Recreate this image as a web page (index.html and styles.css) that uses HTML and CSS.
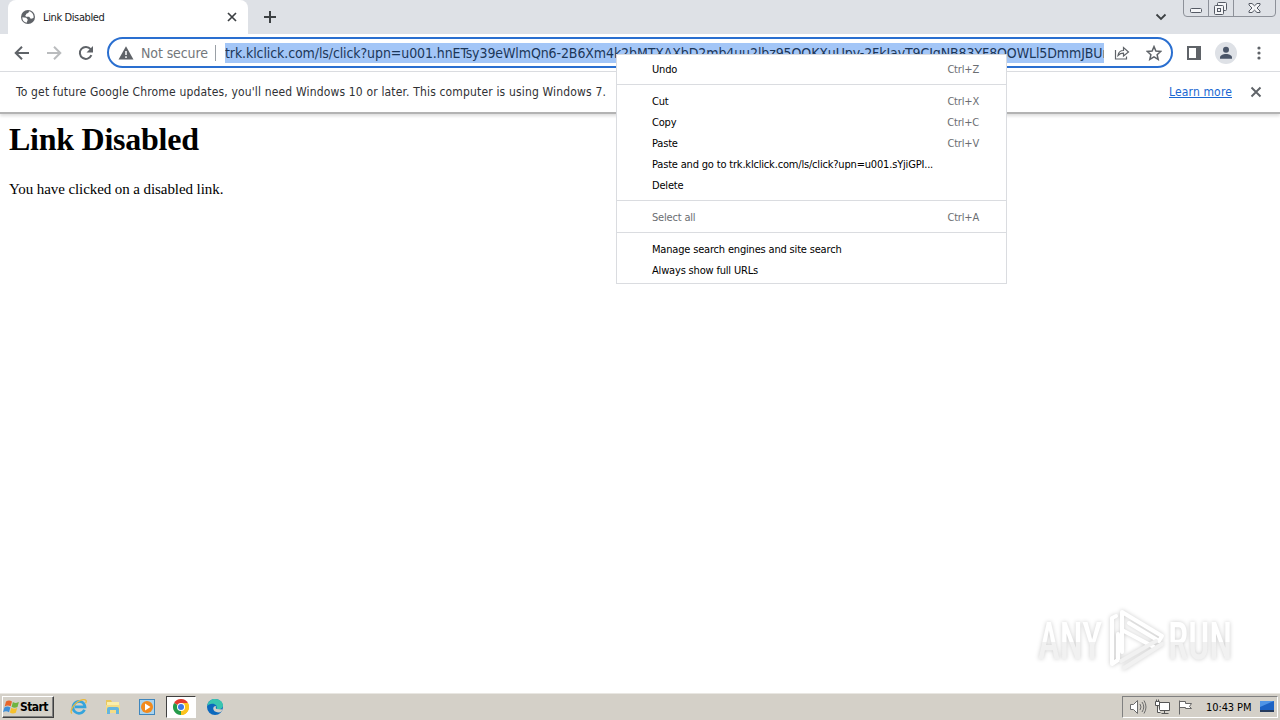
FILE: index.html
```html
<!DOCTYPE html>
<html lang="en">
<head>
  <meta charset="UTF-8">
  <meta name="viewport" content="width=device-width, initial-scale=1.0">
  <title>Link Disabled</title>
  <link rel="stylesheet" href="styles.css">
</head>
<body>
  <header class="tab-strip">
    <div class="tab">
      <svg class="favicon" width="16" height="16" viewBox="0 0 16 16">
        <circle cx="8" cy="8" r="7" fill="#5f6368"/>
        <path d="M2.3 8.2l4 .6 1.5 2-1.2 2.9C3.900 13.300 2.200 11 2.300 8.200zM9 2.300c-.2 1.400-1 2-2.200 2.300-.8.200-.4 1.500-1.600 1.800L6 7.700h3.200l1.500 2.100 1.500-.2 1.400-.9C14 5.500 12 2.900 9 2.300z" fill="#fff"/>
      </svg>
      <span class="tab-title">Link Disabled</span>
      <svg class="tab-close" width="10" height="10" viewBox="0 0 10 10"><path d="M1 1l8 8M9 1l-8 8" stroke="#3c4043" stroke-width="1.700"/></svg>
    </div>
    <svg class="new-tab" width="14" height="14" viewBox="0 0 14 14"><path d="M7 1v12M1 7h12" stroke="#3c4043" stroke-width="2"/></svg>
    <svg class="tab-search" width="12" height="8" viewBox="0 0 12 8"><path d="M1.500 1.500L6 6l4.500-4.500" fill="none" stroke="#3c4043" stroke-width="1.800"/></svg>
    <svg class="window-controls" width="94" height="18" viewBox="0 0 94 18" fill="none">
      <path d="M.5 0v13q0 3.500 3.500 3.500h85q3.500 0 3.500-3.500V0M25.500 0v16M50.500 0v16" stroke="#8d9199"/>
      <g stroke="#555a64" fill="#f4f5f7">
        <rect x="7.500" y="8.500" width="11" height="4" rx="1"/>
        <rect x="34.500" y="2.500" width="9" height="8" rx="1"/>
        <rect x="31.500" y="5.500" width="9" height="9" rx="1"/>
        <rect x="34.500" y="8.500" width="3" height="3"/>
        <path d="M66 3.500h3l2.500 2.300L74 3.500h3v1.500L74 8l3 3v1.500h-3l-2.500-2.300-2.500 2.300h-3V11l3-3-3-3z"/>
      </g>
    </svg>
  </header>

  <nav class="toolbar">
    <svg class="nav-icon" width="16" height="16" viewBox="0 0 16 16"><path d="M15 8H2M8 1.700L1.700 8 8 14.300" fill="none" stroke="#5f6368" stroke-width="2"/></svg>
    <svg class="nav-icon" width="16" height="16" viewBox="0 0 16 16"><path d="M1 8h13M8 1.700L14.300 8 8 14.300" fill="none" stroke="#babcbe" stroke-width="2"/></svg>
    <svg class="nav-icon" width="16" height="16" viewBox="0 0 16 16"><path d="M13.400 10.200A6 6 0 1 1 12.600 4.200" fill="none" stroke="#5f6368" stroke-width="2"/><path d="M15 1v6.500H8.500z" fill="#5f6368"/></svg>
    <div class="omnibox">
      <svg class="warning" width="16" height="14" viewBox="0 0 16 14"><path d="M8 .3L15.500 13.500H.5z" fill="#5f6368"/><path d="M8 5v4M8 10.300v1.700" stroke="#fff" stroke-width="1.500"/></svg>
      <span class="security">Not secure</span>
      <span class="divider"></span>
      <span class="url">trk.klclick.com/ls/click?upn=u001.hnETsy39eWlmQn6-2B6Xm4k2bMTXAXbD2mb4uu2lbz95OOKXuUpv-2FkIavT9CJqNB83YF8OOWLl5DmmJBUr</span>
      <svg class="share" width="16" height="14" viewBox="0 0 16 14" fill="none" stroke="#5f6368" stroke-width="1.200"><path d="M1.500 4v9h11v-2.500M4 9.500c.5-3.500 2.500-5 5.500-5V1.500L14.500 6l-5 4V7.200C7 7.200 5.400 8 4 9.500z"/></svg>
      <svg class="star" width="16" height="16" viewBox="0 0 16 16"><path d="M8 1.600l1.900 4.500 4.800.4-3.600 3.200 1.100 4.700L8 11.900l-4.200 2.500 1.100-4.700L1.300 6.500l4.800-.4z" fill="none" stroke="#5f6368" stroke-width="1.500"/></svg>
    </div>
    <svg class="side-panel" width="14" height="14" viewBox="0 0 14 14"><path d="M0 0h14v14H0zM2 2v10h7V2z" fill="#5f6368" fill-rule="evenodd"/></svg>
    <svg class="avatar" width="22" height="22" viewBox="0 0 22 22"><circle cx="11" cy="11" r="11" fill="#dee1e6"/><circle cx="11" cy="7.800" r="3" fill="#4a5568"/><path d="M5 16.800v-1.300c0-2.200 3-3.500 6-3.500s6 1.300 6 3.500v1.300z" fill="#4a5568"/></svg>
    <svg class="more" width="4" height="14" viewBox="0 0 4 14" fill="#5f6368"><circle cx="2" cy="2" r="1.600"/><circle cx="2" cy="7" r="1.600"/><circle cx="2" cy="12" r="1.600"/></svg>
  </nav>

  <div class="infobar">
    <span class="infobar-text">To get future Google Chrome updates, you'll need Windows 10 or later. This computer is using Windows 7.</span>
    <a class="learn-more">Learn more</a>
    <svg class="infobar-close" width="12" height="12" viewBox="0 0 12 12"><path d="M1.500 1.500l9 9M10.500 1.500l-9 9" stroke="#5f6368" stroke-width="1.900"/></svg>
  </div>

  <main class="page">
    <h1>Link Disabled</h1>
    <p>You have clicked on a disabled link.</p>
  </main>

  <div class="context-menu">
    <div class="menu-group">
      <div class="menu-item"><span>Undo</span><span class="shortcut">Ctrl+Z</span></div>
    </div>
    <div class="menu-group">
      <div class="menu-item"><span>Cut</span><span class="shortcut">Ctrl+X</span></div>
      <div class="menu-item"><span>Copy</span><span class="shortcut">Ctrl+C</span></div>
      <div class="menu-item"><span>Paste</span><span class="shortcut">Ctrl+V</span></div>
      <div class="menu-item"><span>Paste and go to trk.klclick.com/ls/click?upn=u001.sYjiGPI...</span></div>
      <div class="menu-item"><span>Delete</span></div>
    </div>
    <div class="menu-group">
      <div class="menu-item disabled"><span>Select all</span><span class="shortcut">Ctrl+A</span></div>
    </div>
    <div class="menu-group">
      <div class="menu-item"><span>Manage search engines and site search</span></div>
      <div class="menu-item"><span>Always show full URLs</span></div>
    </div>
  </div>

  <svg class="watermark" width="220" height="76" viewBox="0 0 220 76">
    <defs>
      <linearGradient id="fade" gradientUnits="userSpaceOnUse" x1="0" y1="0" x2="0" y2="76">
        <stop offset="0.500" stop-color="#fff"/>
        <stop offset="0.500" stop-color="#f1f1f1"/>
      </linearGradient>
    </defs>
    <g class="watermark-text" fill="url(#fade)">
      <text x="8" y="55" textLength="64" lengthAdjust="spacingAndGlyphs">ANY</text>
      <text x="138" y="55" textLength="64" lengthAdjust="spacingAndGlyphs">RUN</text>
    </g>
    <g fill="none" stroke="#fff" stroke-width="4" stroke-linejoin="round" stroke-linecap="round">
      <path d="M86 12l-4 2v46l6-4V30"/>
      <path d="M92 48V8l40 24-3 5-30-18"/>
      <path d="M92 26l32 17"/>
      <path d="M132 40L94 64M126 37L91 57" stroke="#f1f1f1"/>
    </g>
  </svg>

  <footer class="taskbar">
    <div class="start">
      <svg width="17" height="16" viewBox="0 0 17 16">
        <path d="M3 2.500q3-1.800 6 0L7.700 7.300q-3-1.600-6 .1z" fill="#e8662a"/>
        <path d="M9.900 3q3 1.700 6 .1l-1.400 4.800q-3 1.600-5.900-.1z" fill="#6fb43f"/>
        <path d="M1.400 8.400q3-1.600 6 0L6 13.200q-3-1.700-6 0z" fill="#3f8fd8"/>
        <path d="M8.300 8.800q3 1.700 5.900.1l-1.400 4.800q-3 1.600-5.900-.1z" fill="#f6c02c"/>
      </svg>
      <span>Start</span>
    </div>
    <div class="launcher">
      <svg width="18" height="18" viewBox="0 0 18 18" fill="none"><path d="M14.500 11.800a6 6 0 1 1 .5-3H5" stroke="#35a4dc" stroke-width="2.700"/><path d="M2 15.500C-1 13 5 3 13 1.700c3-.5 4 1 2.600 3.500" stroke="#e9b93c" stroke-width="1.300"/></svg>
    </div>
    <div class="launcher">
      <svg width="18" height="18" viewBox="0 0 18 18"><path d="M2 2h5l1 2h7v11H2z" fill="#e9c75c"/><path d="M3 4h12v5H3z" fill="#fbeeaa"/><path d="M2 7h14v8H2z" fill="#f4dc86"/><path d="M3 16v-5q0-2 2-2h8q2 0 2 2v5h-3v-4H6v4z" fill="#64b5df"/></svg>
    </div>
    <div class="launcher">
      <svg width="18" height="18" viewBox="0 0 18 18"><rect x="1.500" y="1.500" width="15" height="15" fill="#a9d3ee" stroke="#3f86bd"/><circle cx="9" cy="9" r="6" fill="#f28a1c"/><path d="M7 5.500L12.500 9 7 12.500z" fill="#fff"/></svg>
    </div>
    <div class="launcher active">
      <svg width="16" height="16" viewBox="0 0 16 16"><path d="M8 8L1.070 4A8 8 0 0 1 14.930 4z" fill="#e33b2e"/><path d="M8 8l6.930-4A8 8 0 0 1 8 16z" fill="#fcc31e"/><path d="M8 8v8A8 8 0 0 1 1.070 4z" fill="#259b4a"/><path d="M8 4h6.930A8 8 0 0 1 8 16l3.460-6z" fill="#fcc31e"/><circle cx="8" cy="8" r="4" fill="#fff"/><circle cx="8" cy="8" r="3" fill="#3b78e7"/></svg>
    </div>
    <div class="launcher">
      <svg width="18" height="18" viewBox="0 0 18 18"><circle cx="9" cy="9" r="8" fill="#0c69bd"/><path d="M1.200 8C2 3.500 5 1 9 1c5 0 8 3 8 6.500 0 3-3 4.500-6.500 3.500C12 8 9 5.500 6 5.800 4 6 2 7 1.200 8z" fill="#39c5b0"/><path d="M8 8.500c-2 2.500 0 6.500 6.500 5.800L17 11.500l-6.500-.5C9.500 10.500 9.500 9 10.500 8z" fill="#d4d0c8"/></svg>
    </div>
    <div class="tray">
      <svg width="18" height="16" viewBox="0 0 18 16" fill="none" stroke="#6b6b6b"><path d="M1.500 5.500h3l4-4v13l-4-4h-3z" fill="#fff"/><path d="M11 5q2 3 0 6M13 3q3.500 5 0 10M15 1.500q4 6.500 0 13"/></svg>
      <svg width="16" height="16" viewBox="0 0 16 16" fill="#fff" stroke="#555"><path d="M5.500 3.500h10v8h-10zM7.500 14.500h7M10.500 11.500v3"/><path d="M1.500 2.500h4v4h-4zM2.500.500v2M4.500.500v2M3.500 6.500v7h3"/></svg>
      <svg width="16" height="16" viewBox="0 0 16 16" fill="#fff" stroke="#666"><path d="M2.500 1.500v14M2.500 2.500h6v2h6l-2 3 2 2h-6v-1h-6z"/></svg>
      <span class="clock">10:43 PM</span>
      <svg class="desktop" width="16" height="14" viewBox="0 0 16 14"><path d="M1 1h14v9H1z" fill="#1c62c4"/><path d="M1 1h14L1 7z" fill="#4f94e6"/><path d="M1 10h14v2H1z" fill="#253a5c"/></svg>
    </div>
  </footer>
</body>
</html>
```
FILE: styles.css
```css
body {
    margin: 0;
    height: 720px;
    display: flex;
    flex-direction: column;
    overflow: hidden;
    position: relative;
    background-color: #fff;
    font-family: "DejaVu Sans Condensed", "DejaVu Sans", sans-serif;
    font-stretch: condensed;
    color: #202124;
    white-space: nowrap;
}

svg {
    display: block;
    flex-shrink: 0;
}

.tab-strip {
    height: 34px;
    flex-shrink: 0;
    display: flex;
    align-items: center;
    background-color: #dee1e6;
}

.tab {
    width: 240px;
    height: 34px;
    margin-left: 8px;
    box-sizing: border-box;
    padding: 0 11px 0 12px;
    display: flex;
    align-items: center;
    background-color: #fff;
    border-radius: 8px 8px 0 0;
}

.tab-title {
    flex: 1;
    margin-left: 7px;
    font-size: 11px;
    letter-spacing: -0.38px;
}

.new-tab {
    margin-left: 15px;
}

.tab-search {
    margin-left: auto;
}

.window-controls {
    align-self: flex-start;
    margin: 0 3px 0 16px;
}

.toolbar {
    height: 37px;
    flex-shrink: 0;
    display: flex;
    align-items: center;
    border-bottom: 1px solid #dadce0;
}

.nav-icon {
    margin-left: 14px;
    margin-right: 2px;
}

.omnibox {
    width: 1066px;
    height: 31px;
    box-sizing: border-box;
    margin-left: 11px;
    padding: 0 9px;
    display: flex;
    align-items: center;
    border: 2px solid #2a6fd0;
    border-radius: 16px;
}

.security {
    width: 67px;
    margin-left: 7px;
    font-size: 14px;
    letter-spacing: -0.1px;
    color: #73777b;
}

.divider {
    width: 1px;
    height: 16px;
    margin: 0 9px 0 7px;
    background-color: #9aa0a6;
}

.url {
    width: 879px;
    height: 20px;
    line-height: 20px;
    overflow: hidden;
    font-size: 14px;
    letter-spacing: -0.1px;
    color: #1c3759;
    background-color: #a3c6f7;
}

.share {
    margin-left: 10px;
}

.star {
    margin-left: 16px;
}

.side-panel {
    margin-left: 14px;
}

.avatar {
    margin-left: 14px;
}

.more {
    margin-left: 20px;
}

.infobar {
    height: 40px;
    flex-shrink: 0;
    display: flex;
    align-items: center;
    padding: 0 18px 0 16px;
    border-bottom: 2px solid #b3b3b3;
    box-shadow: 0 2px 3px #ddd;
    font-size: 12px;
}

.infobar-text {
    letter-spacing: 0.16px;
    color: #303134;
}

.learn-more {
    margin-left: auto;
    margin-right: 18px;
    letter-spacing: 0.15px;
    color: #1967d2;
    text-decoration: underline;
}

.page {
    flex: 1;
    padding: 0 9px;
    font-family: "Liberation Serif", serif;
    color: #000;
}

.page h1 {
    margin: 7px 0 0;
    font-size: 32px;
    line-height: 36px;
    letter-spacing: -0.25px;
}

.page p {
    margin: 23px 0 0;
    font-size: 15px;
    line-height: 18px;
    letter-spacing: -0.08px;
}

.context-menu {
    position: absolute;
    left: 616px;
    top: 54px;
    width: 391px;
    height: 230px;
    box-sizing: border-box;
    border: 1px solid #dadce0;
    background-color: #fff;
    font-size: 11px;
    color: #000;
}

.menu-group {
    padding: 6px 27px 4px 35px;
}

.menu-group + .menu-group {
    border-top: 1px solid #dadce0;
}

.menu-group:first-child {
    padding-top: 4px;
    padding-bottom: 4px;
}

.menu-item {
    height: 21px;
    line-height: 21px;
    display: flex;
    justify-content: space-between;
    letter-spacing: -0.18px;
}

.shortcut,
.disabled {
    color: #6b6e72;
}

.watermark {
    position: absolute;
    left: 1030px;
    top: 604px;
    filter: drop-shadow(0 0 2px rgba(0, 0, 0, 0.2));
}

.watermark-text {
    font-family: Roboto, sans-serif;
    font-size: 51px;
    font-weight: 500;
}

.taskbar {
    height: 26px;
    flex-shrink: 0;
    display: flex;
    align-items: center;
    background-color: #d4d0c8;
    border-top: 1px solid #e9e7e2;
}

.start {
    width: 52px;
    height: 22px;
    box-sizing: border-box;
    margin: 0 10px 0 2px;
    display: flex;
    align-items: center;
    border: 1px solid #fff;
    border-right-color: #404040;
    border-bottom-color: #404040;
    box-shadow: inset -1px -1px #808080;
    font-size: 12px;
    font-weight: bold;
    letter-spacing: -0.6px;
    color: #000;
}

.launcher {
    width: 30px;
    height: 22px;
    margin-right: 4px;
    display: flex;
    align-items: center;
    justify-content: center;
    box-sizing: border-box;
}

.launcher.active {
    background-color: #fff;
    border: 1px solid #404040;
    border-right-color: #fff;
    border-bottom-color: #fff;
}

.tray {
    width: 156px;
    height: 22px;
    box-sizing: border-box;
    margin: 0 2px 0 auto;
    padding-left: 6px;
    display: flex;
    align-items: center;
    gap: 7px;
    border: 1px solid #808080;
    border-right-color: #fff;
    border-bottom-color: #fff;
}

.clock {
    width: 46px;
    margin-left: 6px;
    font-size: 11px;
    letter-spacing: -0.1px;
    color: #000;
}
```
